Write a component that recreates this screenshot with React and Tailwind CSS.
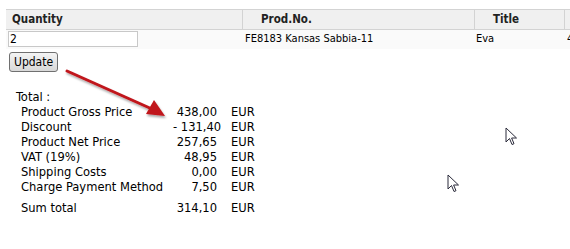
const rows = [
  ['Product Gross Price', '438,00'],
  ['Discount', '- 131,40'],
  ['Product Net Price', '257,65'],
  ['VAT (19%)', '48,95'],
  ['Shipping Costs', '0,00'],
  ['Charge Payment Method', '7,50'],
];

const Cursor = ({ className }) => (
  <svg className={className} width="13" height="19" viewBox="0 0 13 19">
    <path d="M1 1 L1 15 L4.5 11.5 L7 17.5 L9 16.7 L6.6 11 L11.5 11 Z" fill="#fff" stroke="#2a2a3a" strokeWidth="1" strokeLinejoin="miter" />
  </svg>
);

const App = () => {
  return (
    <div className="relative w-[570px] h-[249px] bg-white overflow-hidden text-[12px] text-black" style={{ fontFamily: 'Tahoma, "DejaVu Sans Condensed", "Liberation Sans", sans-serif' }}>
      <div className="pt-[9px] pl-[6px]">
        <div className="grid grid-cols-[237px_232px_90px_20px] bg-[#f0f0f0] border-t border-b border-[#d3d3d3] h-[21px] font-bold text-[#222] text-[11.5px] items-center">
          <div className="pl-[6px] border-r border-[#d3d3d3] h-full flex items-center">Quantity</div>
          <div className="pl-[18px] border-r border-[#d3d3d3] h-full flex items-center">Prod.No.</div>
          <div className="pl-[18px] border-r border-[#d3d3d3] h-full flex items-center">Title</div>
          <div></div>
        </div>
        <div className="grid grid-cols-[237px_232px_90px_20px] h-[19px] items-center bg-[#fafafa] text-[11px]">
          <div className="pl-[2px]">
            <input defaultValue="2" className="w-[130px] h-[16px] border border-[#c8c8c8] bg-white px-[1px] text-[12px] outline-none" />
          </div>
          <div className="pl-[2px]">FE8183 Kansas Sabbia-11</div>
          <div className="pl-[1px]">Eva</div>
          <div className="pl-[2px]">4</div>
        </div>
      </div>
      <div className="pl-[9px] pt-[3px]">
        <button className="h-[20px] px-[4px] border border-[#707070] rounded-[3px] bg-gradient-to-b from-[#f4f4f4] to-[#d8d8d8] text-[12px] text-black">Update</button>
      </div>
      <div className="pl-[16px] pt-[17px] leading-[15px] text-[12.8px]">
        <div>Total :</div>
        <div className="pl-[5px]">
          {rows.map(([label, value]) => (
            <div key={label} className="flex">
              <div className="w-[152px] whitespace-nowrap">{label}</div>
              <div className="w-[44px] text-right whitespace-nowrap">{value}</div>
              <div className="pl-[14px]">EUR</div>
            </div>
          ))}
          <div className="flex mt-[6px]">
            <div className="w-[152px]">Sum total</div>
            <div className="w-[44px] text-right">314,10</div>
            <div className="pl-[14px]">EUR</div>
          </div>
        </div>
      </div>

      <svg className="absolute left-0 top-0" width="570" height="249">
        <defs>
          <filter id="sh" x="-20%" y="-20%" width="140%" height="140%">
            <feDropShadow dx="1" dy="2" stdDeviation="1.2" floodColor="#000" floodOpacity="0.35" />
          </filter>
        </defs>
        <g filter="url(#sh)">
          <line x1="67" y1="71" x2="152" y2="109" stroke="#c0141a" strokeWidth="3" strokeLinecap="round" />
          <path d="M165 116 L146 114 L154 100 Z" fill="#c0141a" />
        </g>
      </svg>
      <Cursor className="absolute left-[505px] top-[127px]" />
      <Cursor className="absolute left-[447px] top-[174px]" />
    </div>
  );
};

export default App;
